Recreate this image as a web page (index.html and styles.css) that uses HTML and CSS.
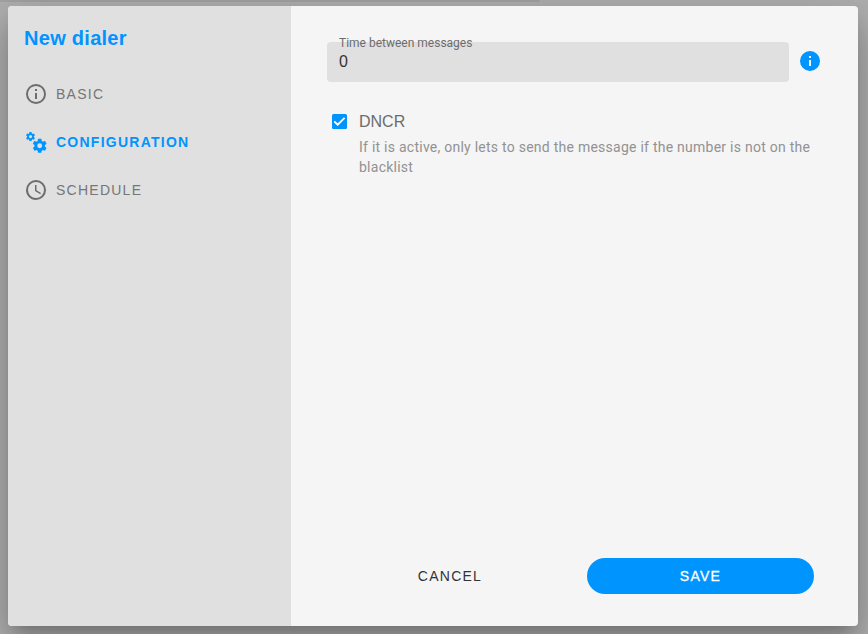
FILE: index.html
```
<!DOCTYPE html>
<html lang="en">
<head>
<meta charset="utf-8">
<title>New dialer</title>
<link rel="stylesheet" href="styles.css">
</head>
<body>
<div class="strip"></div>
<main class="dialog">
  <aside class="sidebar">
    <h1>New dialer</h1>
    <nav>
      <a class="item"><svg viewBox="0 0 24 24"><path d="M11 9h2V7h-2m1 13c-4.41 0-8-3.59-8-8s3.59-8 8-8 8 3.59 8 8-3.59 8-8 8m0-18A10 10 0 0 0 2 12a10 10 0 0 0 10 10 10 10 0 0 0 10-10A10 10 0 0 0 12 2m-1 15h2v-6h-2v6z"/></svg><span>BASIC</span></a>
      <a class="item active"><svg viewBox="0 0 24 24"><defs><path id="cog" d="M12 15.5A3.5 3.5 0 0 1 8.500 12 3.500 3.500 0 0 1 12 8.500a3.500 3.500 0 0 1 3.500 3.500 3.500 3.500 0 0 1-3.500 3.500m7.430-2.530c.04-.32.07-.64.07-.97s-.03-.66-.07-1l2.110-1.630c.19-.15.24-.42.12-.64l-2-3.460c-.12-.22-.39-.31-.61-.22l-2.490 1c-.52-.39-1.060-.73-1.690-.98l-.37-2.650A.506.506 0 0 0 14 2h-4c-.25 0-.46.18-.5.42l-.37 2.650c-.63.25-1.170.59-1.690.98l-2.490-1c-.22-.09-.49 0-.61.22l-2 3.460c-.13.22-.07.49.12.64L4.570 11c-.04.34-.07.67-.07 1s.03.65.07.97l-2.110 1.660c-.19.15-.25.42-.12.64l2 3.460c.12.22.39.3.61.22l2.490-1.010c.52.4 1.060.74 1.690.99l.37 2.650c.04.24.25.42.5.42h4c.25 0 .46-.18.5-.42l.37-2.650c.63-.26 1.170-.59 1.690-.99l2.490 1.010c.22.08.49 0 .61-.22l2-3.460c.12-.22.07-.49-.12-.64l-2.110-1.660z"/></defs><use href="#cog" transform="translate(1.100 1.200) scale(.45)"/><use href="#cog" transform="translate(7.300 7.400) scale(.7)"/></svg><span>CONFIGURATION</span></a>
      <a class="item"><svg viewBox="0 0 24 24"><path d="M12 20a8 8 0 0 0 8-8 8 8 0 0 0-8-8 8 8 0 0 0-8 8 8 8 0 0 0 8 8m0-18a10 10 0 0 1 10 10 10 10 0 0 1-10 10C6.470 22 2 17.500 2 12A10 10 0 0 1 12 2m.5 5v5.250l4.500 2.670-.75 1.230L11 13V7h1.500z"/></svg><span>SCHEDULE</span></a>
    </nav>
  </aside>
  <section class="content">
    <div class="row">
      <label class="field"><span class="label">Time between messages</span><span class="value">0</span></label>
      <svg class="info" viewBox="0 0 24 24"><path d="M13 9h-2V7h2m0 10h-2v-6h2m-1-9A10 10 0 0 0 2 12a10 10 0 0 0 10 10 10 10 0 0 0 10-10A10 10 0 0 0 12 2z"/></svg>
    </div>
    <div class="option">
      <svg class="check" viewBox="0 0 15 15"><rect width="15" height="15" rx="1.500"/><path d="M2.300 7.500 5.700 10.700 12.600 3.800"/></svg>
      <div>
        <div class="name">DNCR</div>
        <p>If it is active, only lets to send the message if the number is not on the blacklist</p>
      </div>
    </div>
    <footer>
      <button class="cancel">CANCEL</button>
      <button class="save">SAVE</button>
    </footer>
  </section>
</main>
</body>
</html>
```
FILE: styles.css
```
* { box-sizing: border-box; }
body {
  margin: 0;
  height: 634px;
  overflow: hidden;
  background: #b0b0b0;
  font-family: Roboto, sans-serif;
}
.strip {
  width: 540px;
  height: 2px;
  margin-bottom: 4px;
  background: #a3a3a3;
  border-radius: 0 0 4px 0;
}
.dialog {
  display: flex;
  width: 850px;
  height: 620px;
  margin-left: 8px;
  border-radius: 4px;
  overflow: hidden;
  background: #f5f5f5;
  box-shadow: 0 11px 15px -7px rgba(0,0,0,.2), 0 24px 38px 3px rgba(0,0,0,.14), 0 9px 46px 8px rgba(0,0,0,.12);
}
.sidebar {
  width: 283px;
  padding: 16px;
  background: #e0e0e0;
}
h1 {
  margin: 0 0 16px;
  font: bold 20px/32px "Liberation Sans", sans-serif;
  letter-spacing: .28px;
  color: #0094ff;
  white-space: nowrap;
}
.item {
  display: flex;
  align-items: center;
  gap: 8px;
  height: 48px;
  font: 14px/20px "Liberation Sans", sans-serif;
  letter-spacing: 1.25px;
  color: #767676;
}
.item svg { width: 24px; height: 24px; fill: #6c6c6c; }
.item.active { color: #0094ff; font-weight: bold; }
.item.active svg { fill: #0094ff; }
.content {
  display: flex;
  flex-direction: column;
  flex: 1;
  padding: 36px 36px 32px;
}
.row { display: flex; align-items: center; gap: 9px; }
.field {
  display: flex;
  flex-direction: column;
  width: 462px;
  height: 40px;
  padding: 0 12px;
  border-radius: 4px;
  background: #e0e0e0;
}
.label {
  margin-top: -7px;
  font-size: 12px;
  line-height: 16px;
  color: #6c6c6c;
}
.value { font: 16px/22px "Liberation Sans", sans-serif; color: #333; }
.info { width: 24px; height: 24px; margin-top: -2px; fill: #0094ff; }
.option {
  display: grid;
  grid-template-columns: 15px 460px;
  gap: 12px;
  margin: 30px 0 0 5px;
}
.check { width: 15px; height: 15px; margin-top: 2px; fill: #0094ff; }
.check path { fill: none; stroke: #fff; stroke-width: 1.8; }
.name { font: 16px/20px "Liberation Sans", sans-serif; color: #6c6c6c; }
.option p {
  margin: 5px 0 0;
  font-size: 14px;
  line-height: 20px;
  letter-spacing: .25px;
  color: #929292;
}
footer { display: flex; gap: 24px; margin-top: auto; margin-left: -18px; }
button {
  height: 36px;
  padding: 0;
  border: 0;
  border-radius: 18px;
  background: none;
  font: 14px "Liberation Sans", sans-serif;
  letter-spacing: 1.25px;
}
.cancel { width: 226px; margin-left: 28px; color: #333; }
.save { width: 227px; background: #0094ff; color: #fff; -webkit-text-stroke: .3px #fff; }
```
